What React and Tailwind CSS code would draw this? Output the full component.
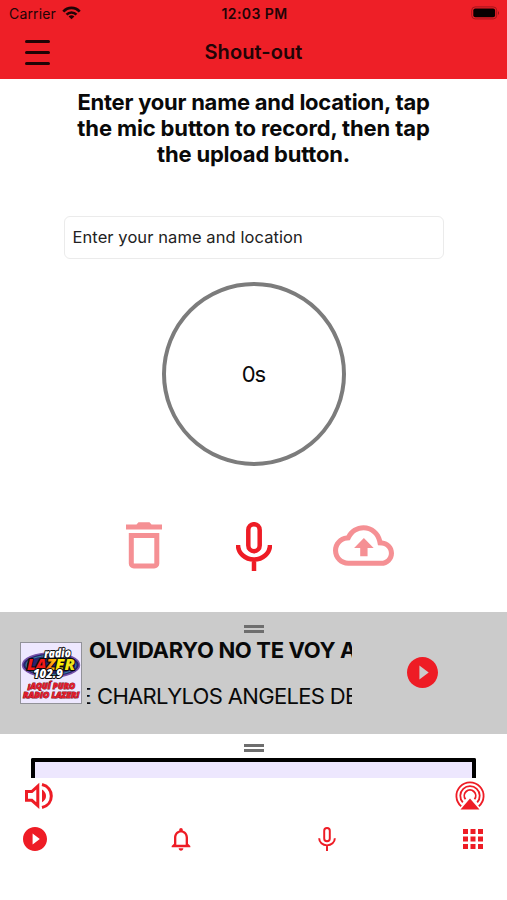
const RED = '#ee1c25';

function PlayCircle({ className }) {
  return (
    <svg viewBox="2 2 20 20" className={className} fill={RED}>
      <path d="M12 2C6.48 2 2 6.48 2 12s4.48 10 10 10 10-4.48 10-10S17.52 2 12 2zm-2 14.5v-9l6 4.5-6 4.5z" />
    </svg>
  );
}

function Mic({ className, stroke }) {
  return (
    <svg viewBox="0 0 36 49" className={className} fill="none" stroke={RED} strokeWidth={stroke}>
      <rect x="12.3" y="2.2" width="11.4" height="27" rx="5.7" />
      <path d="M2 23c0 8 7 14.500 16 14.500S34 31 34 23M18 37v12" />
    </svg>
  );
}

function Grip({ className = '' }) {
  return (
    <div className={`mx-auto flex h-[8px] w-[20px] shrink-0 flex-col justify-between ${className}`}>
      <div className="h-[3px] bg-[#6e6e6e]" />
      <div className="h-[3px] bg-[#6e6e6e]" />
    </div>
  );
}

function StationLogo() {
  return (
    <svg viewBox="0 0 62 62" className="h-[62px] w-[62px] shrink-0" fontFamily="Open Sans, sans-serif" fontWeight="800" fontStyle="italic">
      <defs>
        <linearGradient id="lazer" gradientUnits="userSpaceOnUse" x1="7" x2="55" y1="0" y2="0">
          <stop offset="0.36" stopColor="#f01818" />
          <stop offset="0.5" stopColor="#ff9a10" />
          <stop offset="0.65" stopColor="#fff000" />
          <stop offset="1" stopColor="#e8e020" />
        </linearGradient>
      </defs>
      <rect x="0.5" y="0.5" width="61" height="61" fill="#eee8ff" stroke="#929299" />
      <ellipse cx="31" cy="23" rx="28.500" ry="12" fill="#28236d" stroke="#7652aa" strokeWidth="1.500" />
      <ellipse cx="31" cy="23" rx="25" ry="9.500" fill="none" stroke="#388da5" strokeWidth="1" />
      <g stroke="#080808" strokeWidth="2" paintOrder="stroke" strokeLinejoin="round">
        <text x="24" y="15.500" fontSize="12" fill="white" textLength="27" lengthAdjust="spacingAndGlyphs" transform="rotate(-2 37 12)">radio</text>
        <text x="7" y="28" fontSize="15" fill="url(#lazer)" textLength="48" lengthAdjust="spacingAndGlyphs">LAZER</text>
        <text x="13" y="36" fontSize="11.500" fill="white" textLength="30" lengthAdjust="spacingAndGlyphs">102.9</text>
      </g>
      <g fill="#e51b2b" stroke="#81151f" strokeWidth="0.9" paintOrder="stroke">
        <text x="8" y="46.500" fontSize="8" textLength="47" lengthAdjust="spacingAndGlyphs">¡AQUÍ PURO</text>
        <text x="3" y="56" fontSize="8" textLength="56" lengthAdjust="spacingAndGlyphs">RADIO LAZER!</text>
      </g>
    </svg>
  );
}

function Header() {
  return (
    <header className="h-[79px] bg-[#ee1f27] text-[#210406]">
      <div className="grid h-[27px] grid-cols-3 items-center pl-[9px] pr-[7px]">
        <div className="flex items-center gap-[6px]">
          <span className="text-[14px] tracking-[0.15px]">Carrier</span>
          <svg viewBox="0 0 20 15" className="mb-px h-[14px] w-[19px]" fill="none" stroke="#210406" strokeWidth="2.800">
            <path d="M1.200 6C6 .6 14 .6 18.800 6M4.700 9.300C7.600 6.200 12.400 6.200 15.300 9.300" />
            <path d="M10 14.300 6.900 11.200Q10 8.400 13.100 11.200Z" fill="#210406" stroke="none" />
          </svg>
        </div>
        <span className="whitespace-nowrap text-center text-[14px] font-semibold tracking-[0.400px]">12:03 PM</span>
        <svg viewBox="0 0 29 14" className="mb-px h-[14px] w-[29px] justify-self-end">
          <rect x="0.700" y="0.900" width="25" height="12" rx="3.500" fill="none" stroke="#a3151c" />
          <rect x="2.300" y="2.500" width="21.800" height="8.800" rx="2" fill="#080001" />
          <path d="M27 5q2 2 0 4z" fill="#8e1319" />
        </svg>
      </div>
      <div className="grid h-[50px] grid-cols-3 items-center px-[25px]">
        <button aria-label="Menu" className="flex h-[25px] w-[25px] flex-col justify-between">
          <span className="h-[3px] w-full rounded-full bg-[#210406]" />
          <span className="h-[3px] w-full rounded-full bg-[#210406]" />
          <span className="h-[3px] w-full rounded-full bg-[#210406]" />
        </button>
        <h1 className="whitespace-nowrap text-center text-[20px] font-semibold tracking-[0.080px]">Shout-out</h1>
      </div>
    </header>
  );
}

function Recorder() {
  return (
    <main className="flex h-[533px] flex-col items-center pt-[10px]">
      <div className="whitespace-nowrap text-center text-[22px] font-bold leading-[26px]">
        <p className="tracking-[-0.240px]">Enter your name and location, tap</p>
        <p className="tracking-[-0.130px]">the mic button to record, then tap</p>
        <p className="tracking-[-0.200px]">the upload button.</p>
      </div>
      <div className="mt-[49px] flex h-[43px] w-[380px] items-center rounded-[6px] border border-[#ebebeb] pl-[8px] text-[16.500px] tracking-[0.080px] text-[#222]">
        <span>Enter your name and location</span>
      </div>
      <div className="mt-[23px] flex h-[184px] w-[184px] items-center justify-center rounded-full border-[4px] border-[#7c7c7c] text-[22px] tracking-[-0.900px]">
        <span>0s</span>
      </div>
      <div className="mt-[55px] flex h-[50px] w-[269px] items-start">
        <svg viewBox="0 0 36 47" className="ml-[7px] mt-[1px] h-[47px] w-[36px]" fill="#f59094">
          <path d="M10.500 2.500 12.500.2h11l2 2.300H36v5H0v-5z" />
          <path fillRule="evenodd" d="M2.800 11h30.500v30.500a5 5 0 0 1-5 5H7.800a5 5 0 0 1-5-5zM7.800 16v25.500h20.500V16z" />
        </svg>
        <Mic className="ml-[74px] mt-[1px] h-[49px] w-[36px]" stroke="4.500" />
        <svg viewBox="0 4 24 16" className="-mr-[7px] ml-[61px] mt-[4px] h-[41px] w-[61px] shrink-0" fill="#f59094">
          <path d="M19.350 10.040C18.670 6.590 15.640 4 12 4 9.110 4 6.600 5.640 5.350 8.040 2.340 8.360 0 10.910 0 14c0 3.310 2.690 6 6 6h13c2.760 0 5-2.240 5-5 0-2.640-2.050-4.780-4.650-4.960zM19 18H6c-2.210 0-4-1.790-4-4 0-2.050 1.530-3.760 3.560-3.970l1.070-.11.5-.95C8.080 7.140 9.940 6 12 6c2.620 0 4.880 1.860 5.390 4.430l.3 1.500 1.530.11c1.560.1 2.780 1.410 2.780 2.960 0 1.650-1.350 3-3 3z" />
          <path d="M8.300 13h2.400v3.200h2.900V13H16l-3.850-4z" />
        </svg>
      </div>
    </main>
  );
}

function Player() {
  return (
    <section className="flex h-[122px] flex-col bg-[#cbcbcb] pt-[13px]">
      <Grip />
      <div className="flex h-[90px] items-start pl-[20px]">
        <div className="mt-[9px] flex"><StationLogo /></div>
        <div className="ml-[5px] flex w-[265px] flex-col overflow-hidden whitespace-nowrap text-[22px]">
          <p className="mt-[3px] pl-[2px] font-bold leading-[28px] tracking-[-0.340px]">OLVIDARYO NO TE VOY A</p>
          <p className="mt-[18px] flex leading-[28px] tracking-[-0.660px]">
            <span className="flex w-[4px] shrink-0 justify-end overflow-hidden">E</span>
            <span className="ml-[6px] shrink-0">CHARLYLOS ANGELES DE</span>
          </p>
        </div>
        <button aria-label="Play" className="ml-[55px] mt-[24px]">
          <PlayCircle className="block h-[31px] w-[31px]" />
        </button>
      </div>
    </section>
  );
}

function Footer() {
  return (
    <footer className="flex flex-col pt-[10px]">
      <Grip />
      <div className="mx-auto mt-[6px] h-[20px] w-[445px] rounded-t-[2px] border-x-[4px] border-t-[4px] border-black bg-[#ede7fe]" />
      <div className="mt-[2px] flex h-[32px] items-center justify-between pl-[25px] pr-[22px]">
        <svg viewBox="0 0 28 28" className="h-[28px] w-[28px]" fill="none" stroke={RED} strokeWidth="3">
          <path d="M1.500 9.500h5.300l6-5.300v19.400l-6-5.300H1.500z" />
          <path d="M17 7.500Q21 10 21 14T17 20.200Z" fill={RED} stroke="none" />
          <path d="M17 2.500C29.400 5.500 29.400 22.500 17 25.500" />
        </svg>
        <svg viewBox="0 0 30 30" className="h-[30px] w-[30px]" fill="none" stroke={RED} strokeWidth="1.800">
          <path d="M6.200 25.300A13.600 13.600 0 1 1 23.800 25.300M7.800 21.300A9.700 9.700 0 1 1 22.200 21.300M10.500 18.200A5.700 5.700 0 1 1 19.500 18.200" />
          <path d="M15 17.500 24.500 28.500h-19z" fill={RED} stroke="none" />
        </svg>
      </div>
      <nav className="mt-[11px] flex h-[32px] items-center pl-[23px]">
        <PlayCircle className="h-[24px] w-[24px]" />
        <svg viewBox="0 0 24 24" className="ml-[120px] h-[28px] w-[28px]" fill={RED}>
          <path d="M12 22c1.100 0 2-.9 2-2h-4c0 1.100.9 2 2 2zm6-6v-5c0-3.070-1.630-5.640-4.500-6.320V4c0-.83-.67-1.500-1.500-1.500s-1.500.67-1.500 1.500v.68C7.640 5.360 6 7.920 6 11v5l-2 2v1h16v-1l-2-2zm-2 1H8v-6c0-2.480 1.510-4.500 4-4.500s4 2.020 4 4.500v6z" />
        </svg>
        <Mic className="ml-[123px] h-[24px] w-[18px]" stroke="4" />
        <svg viewBox="0 0 20 20" className="ml-[127px] h-[20px] w-[20px]" fill={RED}>
          <path d="M0 0h5v5H0zM7.500 0h5v5h-5zM15 0h5v5h-5zM0 7.500h5v5H0zM7.500 7.500h5v5h-5zM15 7.500h5v5h-5zM0 15h5v5H0zM7.500 15h5v5h-5zM15 15h5v5h-5z" />
        </svg>
      </nav>
    </footer>
  );
}

export default function App() {
  return (
    <div className="h-[900px] w-[507px] overflow-hidden bg-white font-['Inter',sans-serif] text-[#090909]">
      <Header />
      <Recorder />
      <Player />
      <Footer />
    </div>
  );
}
